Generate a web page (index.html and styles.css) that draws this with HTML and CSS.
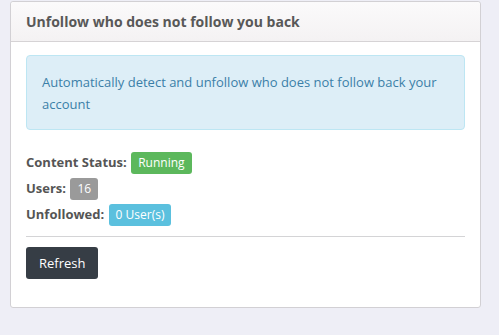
FILE: index.html
```html
<!DOCTYPE html>
<html lang="en">
<head>
  <meta charset="UTF-8">
  <title>Unfollow</title>
  <link rel="stylesheet" href="styles.css">
</head>
<body>
  <div class="panel">
    <div class="panel-heading">Unfollow who does not follow you back</div>
    <div class="panel-body">
      <div class="alert">Automatically detect and unfollow who does not follow back your account</div>
      <div class="stat"><b>Content Status:</b> <span class="label green">Running</span></div>
      <div class="stat"><b>Users:</b> <span class="label gray">16</span></div>
      <div class="stat"><b>Unfollowed:</b> <span class="label blue">0 User(s)</span></div>
      <hr>
      <button class="btn">Refresh</button>
    </div>
  </div>
</body>
</html>
```

FILE: styles.css
```css
/* Base */
* { margin: 0; padding: 0; box-sizing: border-box; }
body {
  background: #eeeef6; font-family: 'Open Sans', sans-serif;
  font-size: 13px; color: #555;
}

/* Panel */
.panel {
  width: 471px; margin: 1px 0 0 10px;
  background: #fff; border: 1px solid #d2d0d4; border-radius: 3px;
}
.panel-heading {
  height: 40px; padding: 10px 15px 9px;
  background: linear-gradient(to bottom, #fbfafb, #f4f2f3);
  border-bottom: 1px solid #d6d3d5; border-radius: 3px 3px 0 0;
  font-size: 14px; font-weight: 700; color: #585858; line-height: 20px;
}
.panel-body { padding: 13px 15px 28px; }

/* Alert */
.alert {
  padding: 15px 15px 14px; margin-bottom: 19px;
  background: #ddeef7; border: 1px solid #bde6f3; border-radius: 4px;
  color: #3b7fa8; font-size: 13px; line-height: 22px;
}

/* Stats */
.stat { line-height: 26px; color: #555; }
.stat b { font-weight: 700; margin-right: 1px; }
.label {
  display: inline-block; padding: 0 7px; line-height: 22px;
  border-radius: 3px; color: #fff; font-size: 12px; vertical-align: middle;
  position: relative; top: -1px;
}
.green { background: #5cb85c; }
.gray { background: #9a9a9a; }
.blue { background: #5bc0de; }

hr { border: 0; border-top: 1px solid #d4d4d6; margin: 9px 0 10px; }

.btn {
  background: #363d45; color: #fff; border: 0; border-radius: 3px;
  font-family: 'Open Sans', sans-serif; font-size: 13px;
  height: 32px; padding: 0 13px;
}
```
